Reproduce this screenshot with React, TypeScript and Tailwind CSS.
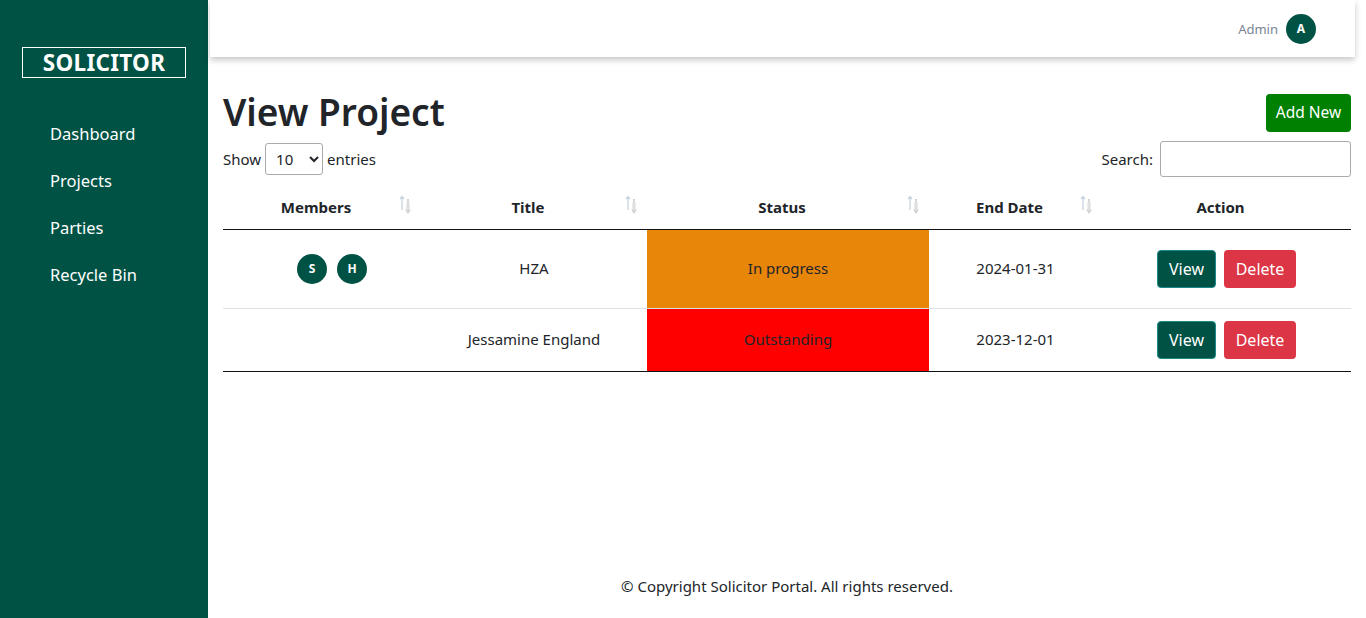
const font = { fontFamily: '"Noto Sans", "Open Sans", sans-serif' };

const SortIcon = () => (
  <svg width="18" height="20" viewBox="0 0 18 20" className="absolute right-[6px] top-[10px]">
    <path d="M5 2 L5 15 M3 4 L5 1.5 L7 4" stroke="#c8d3e0" strokeWidth="1.3" fill="none" />
    <path d="M11 4 L11 17 M9 14.5 L11 17.5 L13 14.5" stroke="#b8b8b8" strokeWidth="1.3" fill="none" />
    <path d="M9 8 L11 5 L13 8 L13 15 L11 18 L9 15 Z" fill="#e4e4e4" opacity="0.7" />
  </svg>
);

const Avatar = ({ letter }: { letter: string }) => (
  <div className="w-[30px] h-[30px] rounded-full bg-[#005244] text-white text-[12px] font-bold flex items-center justify-center">
    {letter}
  </div>
);

const Actions = () => (
  <div className="flex items-center justify-center gap-[8px]">
    <button className="h-[38px] w-[59px] rounded-[4px] bg-[#005244] border border-[#1a8a8a] text-white text-[16px]">
      View
    </button>
    <button className="h-[38px] w-[72px] rounded-[4px] bg-[#dc3545] text-white text-[16px]">
      Delete
    </button>
  </div>
);

const nav = ["Dashboard", "Projects", "Parties", "Recycle Bin"];

export default function App() {
  return (
    <div className="flex w-[1366px] h-[618px] bg-white text-[#212529]" style={font}>
      <aside className="w-[208px] shrink-0 bg-[#005244] text-white">
        <div className="mt-[47px] mx-[22px] h-[31px] border border-white flex items-center justify-center text-[22.5px] font-bold tracking-[0.3px]">
          SOLICITOR
        </div>
        <nav className="mt-[43px] pl-[50px] flex flex-col gap-[22px] text-[16.5px]">
          {nav.map((n) => (
            <div key={n} className="h-[25px] leading-[25px]">{n}</div>
          ))}
        </nav>
      </aside>

      <main className="flex-1 flex flex-col">
        <header className="ml-[2px] mr-[11px] h-[57px] bg-white shadow-[0_3px_6px_rgba(0,0,0,0.22)] flex items-center justify-end pr-[39px]">
          <span className="text-[13px] text-[#7a8594] mr-[8px] mt-[2px]">Admin</span>
          <div className="w-[30px] h-[30px] rounded-full bg-[#005244] text-white text-[12px] font-bold flex items-center justify-center">
            A
          </div>
        </header>

        <div className="px-[15px]">
          <div className="flex items-center justify-between mt-[37px] h-[38px]">
            <h1 className="text-[37px] font-semibold leading-none -mt-[4px]">View Project</h1>
            <button className="h-[38px] w-[85px] rounded-[4px] bg-[#008000] text-white text-[15.5px]">
              Add New
            </button>
          </div>

          <div className="flex items-center justify-between mt-[9px] h-[36px] text-[15px]">
            <div className="flex items-center gap-[4px]">
              <span>Show</span>
              <select className="w-[58px] h-[32px] border border-[#aaa] rounded-[3px] pl-[6px] text-[15px] bg-white" defaultValue="10">
                <option>10</option>
              </select>
              <span>entries</span>
            </div>
            <div className="flex items-center gap-[7px]">
              <span>Search:</span>
              <input className="w-[191px] h-[36px] border border-[#aaa] rounded-[3px]" />
            </div>
          </div>

          <table className="w-full mt-[8px] border-collapse text-[15px]">
            <thead>
              <tr className="h-[44px] border-b border-[#111]">
                <th className="relative w-[198px] font-bold pr-[12px]">Members<SortIcon /></th>
                <th className="relative w-[226px] font-bold pr-[12px]">Title<SortIcon /></th>
                <th className="relative w-[282px] font-bold pr-[12px]">Status<SortIcon /></th>
                <th className="relative w-[173px] font-bold pr-[12px]">End Date<SortIcon /></th>
                <th className="font-bold pr-[12px]">Action</th>
              </tr>
            </thead>
            <tbody>
              <tr className="h-[79px] border-b border-[#dee2e6]">
                <td>
                  <div className="flex justify-center gap-[10px] pl-[20px]">
                    <Avatar letter="S" />
                    <Avatar letter="H" />
                  </div>
                </td>
                <td className="text-center">HZA</td>
                <td className="text-center bg-[#e8860a]">In progress</td>
                <td className="text-center">2024-01-31</td>
                <td><Actions /></td>
              </tr>
              <tr className="h-[63px] border-b border-[#111]">
                <td></td>
                <td className="text-center">Jessamine England</td>
                <td className="text-center bg-[#ff0000]">Outstanding</td>
                <td className="text-center">2023-12-01</td>
                <td><Actions /></td>
              </tr>
            </tbody>
          </table>
        </div>

        <footer className="mt-auto mb-[21px] text-center text-[15px]">
          © Copyright Solicitor Portal. All rights reserved.
        </footer>
      </main>
    </div>
  );
}
